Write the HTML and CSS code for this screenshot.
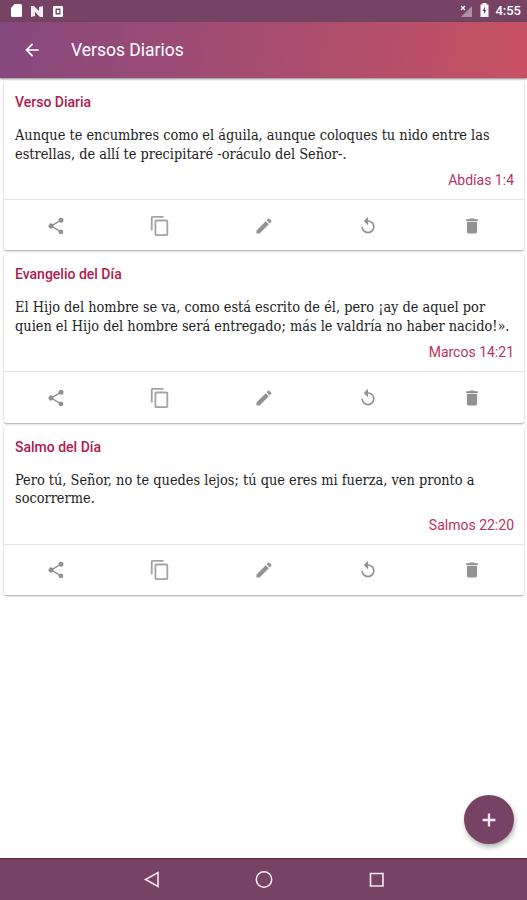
FILE: index.html
```html
<!DOCTYPE html>
<html lang="es">
<head>
    <meta charset="UTF-8">
    <meta name="viewport" content="width=device-width, initial-scale=1.0">
    <title>Versos Diarios</title>
    <link rel="stylesheet" href="styles.css">
</head>
<body>
    <!-- Icons shared by the cards -->
    <svg class="icon-defs" width="0" height="0">
        <symbol id="icon-share" viewBox="0 0 24 24"><path d="M18 16.1c-.8 0-1.4.3-2 .8l-7.1-4.2c.1-.2.1-.5.1-.7s0-.5-.1-.7L16 7.2c.5.5 1.2.8 2 .8a3 3 0 1 0-3-3c0 .2 0 .5.1.7L8 9.8A3 3 0 1 0 8 14.2l7.1 4.2c-.1.2-.1.4-.1.6a2.9 2.9 0 1 0 3-2.9z"/></symbol>
        <symbol id="icon-copy" viewBox="0 0 24 24"><path d="M16 1H4a2 2 0 0 0-2 2v14h2V3h12V1zm3 4H8a2 2 0 0 0-2 2v14c0 1.1.9 2 2 2h11a2 2 0 0 0 2-2V7a2 2 0 0 0-2-2zm0 16H8V7h11v14z"/></symbol>
        <symbol id="icon-edit" viewBox="0 0 24 24"><path d="M3 17.25V21h3.75L17.81 9.94l-3.75-3.75L3 17.25zM20.71 7.04a1 1 0 0 0 0-1.41l-2.34-2.34a1 1 0 0 0-1.41 0l-1.83 1.83 3.75 3.75 1.83-1.83z"/></symbol>
        <symbol id="icon-reset" viewBox="0 0 24 24"><path d="M12 5V1L7 6l5 5V7a6 6 0 1 1-6 6H4a8 8 0 1 0 8-8z"/></symbol>
        <symbol id="icon-delete" viewBox="0 0 24 24"><path d="M6 19c0 1.1.9 2 2 2h8a2 2 0 0 0 2-2V7H6v12zM19 4h-3.5l-1-1h-5l-1 1H5v2h14V4z"/></symbol>
    </svg>

    <div class="status-bar">
        <svg width="56" height="16" viewBox="0 0 56 16" fill="#fff">
            <path d="M5.500 1h6q1.500 0 1.500 1.500v10q0 1.500-1.500 1.500H3.500q-1.500 0-1.500-1.500V5z"/>
            <path d="M22 3h3l5 5V4l4-1v11h-3l-5-5v4l-4 1z" opacity=".9"/>
            <path fill-rule="evenodd" d="M45 3h8q1 0 1 1v9q0 1-1 1h-8q-1 0-1-1V4q0-1 1-1zm1.500 2.500v6h5v-6z"/>
            <path d="M47.800 7h2.500v3h-2.500z"/>
        </svg>
        <div class="status-right">
            <svg width="32" height="16" viewBox="0 0 32 16" fill="#fff">
                <path d="M13 3v11H2z" opacity=".4"/>
                <path d="M2 3l4 4M6 3L2 7" stroke="#fff" stroke-width="1.3"/>
                <path fill-rule="evenodd" d="M23.500 0h4v1.500h2V14h-8V1.500h2zM26 3.500L23.500 8h1.500v3L27.500 7H26z"/>
            </svg>
            <span class="clock">4:55</span>
        </div>
    </div>

    <header class="toolbar">
        <svg width="20" height="20" viewBox="0 0 24 24" fill="#fff"><path d="M20 11H7.83l5.59-5.59L12 4l-8 8 8 8 1.41-1.41L7.83 13H20z"/></svg>
        <h1>Versos Diarios</h1>
    </header>

    <main class="verses">
        <article class="card">
            <div class="card-body">
                <h2>Verso Diaria</h2>
                <p class="verse">Aunque te encumbres como el águila, aunque coloques tu nido entre las<br>estrellas, de allí te precipitaré -oráculo del Señor-.</p>
                <p class="reference">Abdías 1:4</p>
            </div>
            <div class="actions">
                <svg><use href="#icon-share"/></svg>
                <svg class="copy"><use href="#icon-copy"/></svg>
                <svg><use href="#icon-edit"/></svg>
                <svg><use href="#icon-reset"/></svg>
                <svg><use href="#icon-delete"/></svg>
            </div>
        </article>

        <article class="card">
            <div class="card-body">
                <h2>Evangelio del Día</h2>
                <p class="verse">El Hijo del hombre se va, como está escrito de él, pero ¡ay de aquel por<br>quien el Hijo del hombre será entregado; más le valdría no haber nacido!».</p>
                <p class="reference">Marcos 14:21</p>
            </div>
            <div class="actions">
                <svg><use href="#icon-share"/></svg>
                <svg class="copy"><use href="#icon-copy"/></svg>
                <svg><use href="#icon-edit"/></svg>
                <svg><use href="#icon-reset"/></svg>
                <svg><use href="#icon-delete"/></svg>
            </div>
        </article>

        <article class="card">
            <div class="card-body">
                <h2>Salmo del Día</h2>
                <p class="verse">Pero tú, Señor, no te quedes lejos; tú que eres mi fuerza, ven pronto a<br>socorrerme.</p>
                <p class="reference">Salmos 22:20</p>
            </div>
            <div class="actions">
                <svg><use href="#icon-share"/></svg>
                <svg class="copy"><use href="#icon-copy"/></svg>
                <svg><use href="#icon-edit"/></svg>
                <svg><use href="#icon-reset"/></svg>
                <svg><use href="#icon-delete"/></svg>
            </div>
        </article>
    </main>

    <button class="fab" aria-label="Agregar">
        <svg width="22" height="22" viewBox="0 0 24 24" fill="#f3e6ef"><path d="M19 13.300h-5.700V19h-2.600v-5.700H5v-2.600h5.700V5h2.600v5.700H19z"/></svg>
    </button>

    <nav class="nav-bar">
        <svg width="18" height="20" viewBox="0 0 18 20"><path d="M15 2.500v14L2.500 9.500z"/></svg>
        <svg width="18" height="20" viewBox="0 0 18 20"><circle cx="9" cy="9.500" r="7.700"/></svg>
        <svg width="18" height="20" viewBox="0 0 18 20"><path d="M3.500 3.500h12.500v12.500H3.500z"/></svg>
    </nav>
</body>
</html>
```
FILE: styles.css
```css
* {
    box-sizing: border-box;
}

body {
    font-family: Roboto, sans-serif;
    margin: 0;
    height: 900px;
    display: flex;
    flex-direction: column;
    background-color: #fff;
    overflow: hidden;
}

h1, h2, p {
    margin: 0;
}

.icon-defs {
    position: absolute;
}

.status-bar {
    height: 22px;
    flex: none;
    display: flex;
    justify-content: space-between;
    padding: 3px 6px 0 9px;
    background-color: #774365;
    color: #fff;
}

.status-right {
    display: flex;
    gap: 4px;
}

.clock {
    font-size: 13px;
    font-weight: 500;
    line-height: 16px;
}

.toolbar {
    height: 56px;
    flex: none;
    display: flex;
    align-items: center;
    padding-left: 22px;
    background: linear-gradient(100deg, #85487e, #c85162);
    box-shadow: 0 1px 2px rgba(0,0,0,0.5);
    color: #fff;
    z-index: 1;
}

.toolbar h1 {
    margin-left: 29px;
    font-size: 17.5px;
    font-weight: 400;
}

.verses {
    flex: 1;
    display: flex;
    flex-direction: column;
    gap: 3px;
    padding: 3px 3px 0 4px;
}

.card {
    height: 169.3px;
    border-radius: 2px;
    background-color: #fff;
    box-shadow: 0 1px 2px rgba(0,0,0,0.35);
}

.card-body {
    height: 119px;
    padding: 12px 10px 0 11px;
    border-bottom: 1px solid #e6e6e6;
}

.card h2 {
    font-size: 14px;
    font-weight: 500;
    line-height: 18px;
    color: #b3184f;
}

.verse {
    margin-top: 15px;
    font-family: "Roboto Slab", "DejaVu Serif Condensed", "DejaVu Serif", serif;
    font-size: 14.4px;
    line-height: 18.5px;
    white-space: nowrap;
    color: #222;
}

.reference {
    margin-top: 8px;
    font-size: 14px;
    line-height: 18px;
    text-align: right;
    color: #b83262;
}

.actions {
    height: 50px;
    display: grid;
    grid-template-columns: repeat(5, 1fr);
    align-items: center;
    justify-items: center;
    padding-top: 1px;
}

.actions svg {
    width: 20px;
    height: 20px;
    fill: #919191;
}

.actions .copy {
    width: 22px;
    height: 22px;
    fill: #a3a3a3;
}

.fab {
    position: absolute;
    right: 13px;
    top: 795px;
    width: 50px;
    height: 49px;
    display: flex;
    align-items: center;
    justify-content: center;
    border: none;
    border-radius: 50%;
    background-color: #774365;
    box-shadow: 1px 3px 5px rgba(0,0,0,0.3);
}

.nav-bar {
    height: 42px;
    flex: none;
    display: flex;
    align-items: center;
    justify-content: center;
    gap: 94px;
    background-color: #774365;
    border-top: 1px solid #5d2550;
}

.nav-bar svg {
    fill: none;
    stroke: #f5e8f1;
    stroke-width: 1.6;
}
```
